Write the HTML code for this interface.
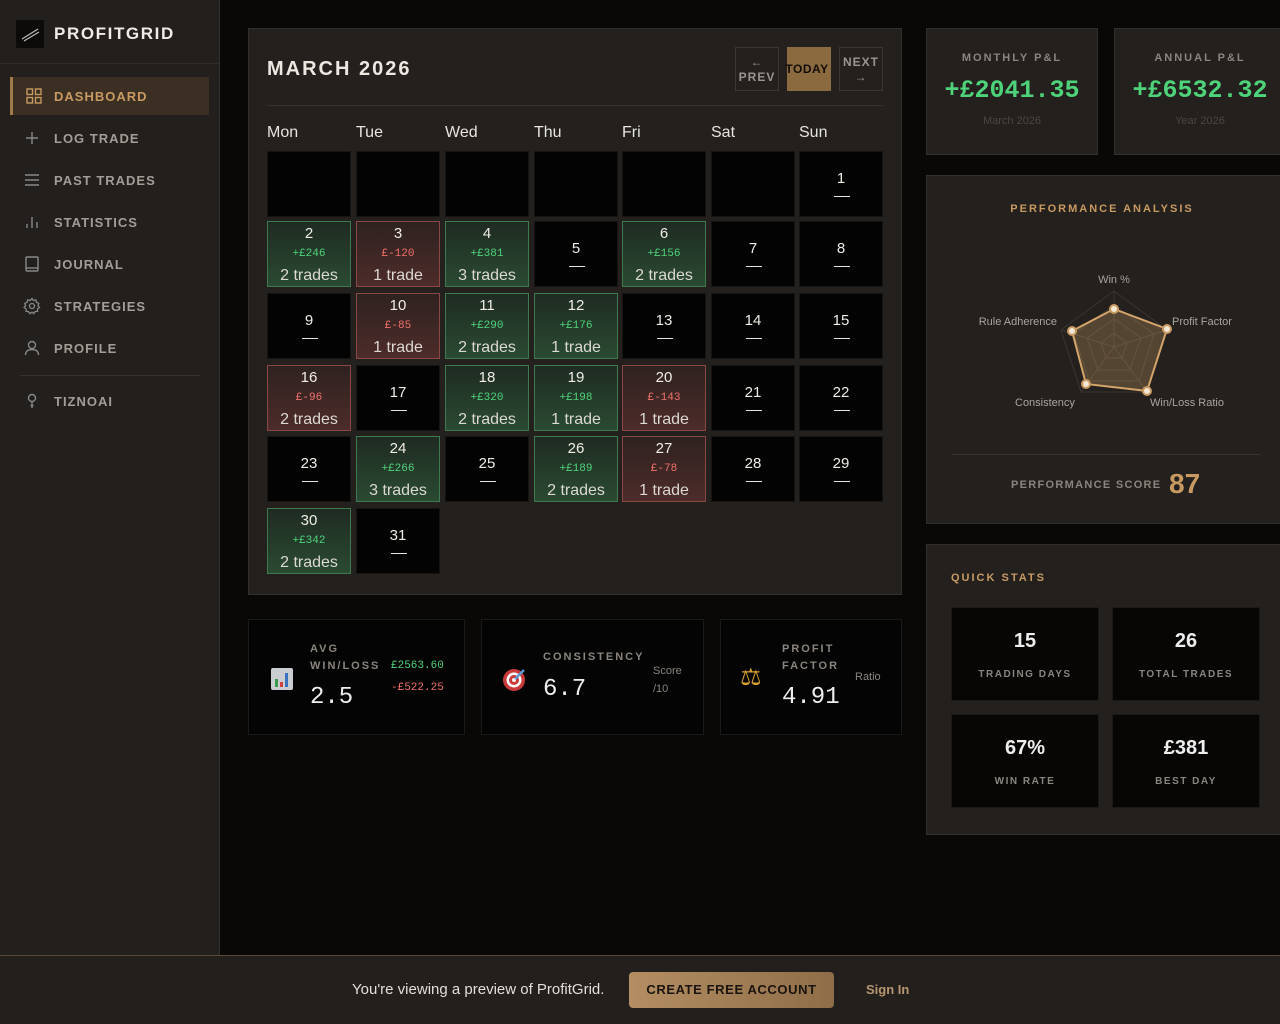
<!DOCTYPE html>
<html><head><meta charset="utf-8"><style>
*{box-sizing:border-box;margin:0;padding:0}
body{width:1280px;height:1024px;background:#0a0807;font-family:"Liberation Sans","DejaVu Sans",sans-serif;position:relative;overflow:hidden;color:#e8e4de}
.a{position:absolute}
.side{left:0;top:0;width:220px;height:955px;background:#221f1c;border-right:1px solid #34302b}
.nav{position:absolute;left:10px;width:199px;height:38px;display:flex;align-items:center;font-size:13px;font-weight:bold;letter-spacing:1px;color:#a29d96}
.nav svg{position:absolute;left:14px}
.nav span{position:absolute;left:44px}
.card{position:absolute;background:#23201d;border:1px solid #33302b}
.cell{position:absolute;width:84px;height:66px;background:#030303;border:1px solid #161412;text-align:center;color:#f0ece6}
.cell .d{position:absolute;left:0;right:0;font-size:15px}
.e .d{top:18px}
.e .dash{position:absolute;left:34px;top:44px;width:16px;height:1px;background:#e8e4de}
.t .d{top:3px}
.t .p{position:absolute;left:0;right:0;top:26px;font-family:"Liberation Mono",monospace;font-size:11px}
.t .n{position:absolute;left:0;right:0;top:45px;font-size:16px;color:#dcd8d2}
.g{background:linear-gradient(#1f2b22,#2a4a32);border-color:#3e7a4f}
.g .p{color:#4ed37a}
.r{background:linear-gradient(#2e2220,#4d2c2a);border-color:#8a4744}
.r .p{color:#f0706a}
.dh{position:absolute;top:124px;font-size:16px;color:#e8e4de}
.lbl{font-size:11px;font-weight:bold;letter-spacing:2px;color:#8a857e}
.qs{position:absolute;width:148px;height:94px;background:#070605;border:1px solid #1c1a17;text-align:center}
.qs b{display:block;margin-top:22px;font-size:20px;color:#eee}
.qs i{display:block;font-style:normal;margin-top:16px;font-size:10px;letter-spacing:1.5px;color:#8a857e;font-weight:bold}
.bc{position:absolute;top:619px;height:116px;background:#050404;border:1px solid #1c1a17}
</style></head><body>
<div class="a side">
 <div class="a" style="left:16px;top:20px;width:28px;height:28px;background:#0c0b0a"><svg width="28" height="28"><path d="M6 19 L22 9 M8 21 L23 12" stroke="#bbb" stroke-width="1.2"/></svg></div>
 <div class="a" style="left:54px;top:24px;font-size:17px;font-weight:bold;letter-spacing:1.6px;color:#efebe5">PROFITGRID</div>
 <div class="a" style="left:0;top:63px;width:219px;height:1px;background:#302c28"></div>
 <div class="nav" style="top:77px;background:#3a2f22;border-left:3px solid #a07a48;color:#c89a62"><svg style="left:13px" width="16" height="16" fill="none" stroke="#c89a62" stroke-width="1.4"><rect x="1" y="1" width="5.5" height="5.5"/><rect x="9.5" y="1" width="5.5" height="5.5"/><rect x="1" y="9.5" width="5.5" height="5.5"/><rect x="9.5" y="9.5" width="5.5" height="5.5"/></svg><span style="left:41px">DASHBOARD</span></div>
 <div class="nav" style="top:119px"><svg width="16" height="16" stroke="#888" stroke-width="1.4"><path d="M8 2v12M2 8h12"/></svg><span>LOG TRADE</span></div>
 <div class="nav" style="top:161px"><svg width="16" height="16" stroke="#888" stroke-width="1.4"><path d="M1 3h14M1 8h14M1 13h14"/></svg><span>PAST TRADES</span></div>
 <div class="nav" style="top:203px"><svg width="16" height="16" stroke="#888" stroke-width="1.4"><path d="M3 14v-4M8 14V3M13 14V8"/></svg><span>STATISTICS</span></div>
 <div class="nav" style="top:245px"><svg width="16" height="16" fill="none" stroke="#888" stroke-width="1.4"><rect x="2" y="1" width="12" height="14" rx="1"/><path d="M2 12h12"/></svg><span>JOURNAL</span></div>
 <div class="nav" style="top:287px"><svg width="18" height="18" fill="none" stroke="#888" stroke-width="1.3" style="left:13px"><circle cx="9" cy="9" r="2.5"/><path d="M9 1.5l1.5 2 2.4-.6.6 2.4 2.3 1-.8 2.3 1.5 1.9-2 1.4.1 2.5-2.5.1-1.3 2.1L9 15.2 6.8 16.6 5.4 14.5 3 14.4l.1-2.5-2-1.4 1.5-1.9L1.8 6.3l2.3-1 .6-2.4 2.4.6z"/></svg><span>STRATEGIES</span></div>
 <div class="nav" style="top:329px"><svg width="16" height="16" fill="none" stroke="#888" stroke-width="1.4"><circle cx="8" cy="5" r="3.5"/><path d="M1.5 15c0-4 3-5.5 6.5-5.5s6.5 1.5 6.5 5.5"/></svg><span>PROFILE</span></div>
 <div class="a" style="left:20px;top:375px;width:180px;height:1px;background:#35312c"></div>
 <div class="nav" style="top:382px"><svg width="16" height="16" fill="none" stroke="#888" stroke-width="1.4"><circle cx="8" cy="5" r="3.5"/><path d="M8 9v6M6.5 12.5h3"/></svg><span>TIZNOAI</span></div>
</div>

<div class="card" style="left:248px;top:28px;width:654px;height:567px"></div>
<div class="a" style="left:267px;top:58px;font-size:20px;font-weight:bold;letter-spacing:2px;color:#ebe7e1">MARCH 2026</div>
<div class="a" style="left:735px;top:47px;width:44px;height:44px;border:1px solid #3a3631;text-align:center;font-size:12px;font-weight:bold;letter-spacing:1px;color:#9a958e;line-height:15px;padding-top:7px">←<br>PREV</div>
<div class="a" style="left:787px;top:47px;width:44px;height:44px;background:#8c6a3f;text-align:center;font-size:12px;font-weight:bold;color:#120d08;line-height:44px;letter-spacing:.5px;white-space:nowrap;overflow:visible"><span style="margin-left:-4px">TODAY</span></div>
<div class="a" style="left:839px;top:47px;width:44px;height:44px;border:1px solid #3a3631;text-align:center;font-size:12px;font-weight:bold;letter-spacing:1px;color:#9a958e;line-height:15px;padding-top:7px">NEXT<br>→</div>
<div class="a" style="left:267px;top:105px;width:616px;height:1px;background:#35312c"></div>
<div class="dh" style="left:267px">Mon</div><div class="dh" style="left:356px">Tue</div><div class="dh" style="left:445px">Wed</div><div class="dh" style="left:534px">Thu</div><div class="dh" style="left:622px">Fri</div><div class="dh" style="left:711px">Sat</div><div class="dh" style="left:799px">Sun</div>

<div class="cell" style="left:267px;top:151px"></div><div class="cell" style="left:356px;top:151px"></div><div class="cell" style="left:445px;top:151px"></div><div class="cell" style="left:534px;top:151px"></div><div class="cell" style="left:622px;top:151px"></div><div class="cell" style="left:711px;top:151px"></div>
<div class="cell e" style="left:799px;top:151px"><div class="d">1</div><div class="dash"></div></div>
<div class="cell t g" style="left:267px;top:221px"><div class="d">2</div><div class="p">+£246</div><div class="n">2 trades</div></div>
<div class="cell t r" style="left:356px;top:221px"><div class="d">3</div><div class="p">£-120</div><div class="n">1 trade</div></div>
<div class="cell t g" style="left:445px;top:221px"><div class="d">4</div><div class="p">+£381</div><div class="n">3 trades</div></div>
<div class="cell e" style="left:534px;top:221px"><div class="d">5</div><div class="dash"></div></div>
<div class="cell t g" style="left:622px;top:221px"><div class="d">6</div><div class="p">+£156</div><div class="n">2 trades</div></div>
<div class="cell e" style="left:711px;top:221px"><div class="d">7</div><div class="dash"></div></div>
<div class="cell e" style="left:799px;top:221px"><div class="d">8</div><div class="dash"></div></div>
<div class="cell e" style="left:267px;top:293px"><div class="d">9</div><div class="dash"></div></div>
<div class="cell t r" style="left:356px;top:293px"><div class="d">10</div><div class="p">£-85</div><div class="n">1 trade</div></div>
<div class="cell t g" style="left:445px;top:293px"><div class="d">11</div><div class="p">+£290</div><div class="n">2 trades</div></div>
<div class="cell t g" style="left:534px;top:293px"><div class="d">12</div><div class="p">+£176</div><div class="n">1 trade</div></div>
<div class="cell e" style="left:622px;top:293px"><div class="d">13</div><div class="dash"></div></div>
<div class="cell e" style="left:711px;top:293px"><div class="d">14</div><div class="dash"></div></div>
<div class="cell e" style="left:799px;top:293px"><div class="d">15</div><div class="dash"></div></div>
<div class="cell t r" style="left:267px;top:365px"><div class="d">16</div><div class="p">£-96</div><div class="n">2 trades</div></div>
<div class="cell e" style="left:356px;top:365px"><div class="d">17</div><div class="dash"></div></div>
<div class="cell t g" style="left:445px;top:365px"><div class="d">18</div><div class="p">+£320</div><div class="n">2 trades</div></div>
<div class="cell t g" style="left:534px;top:365px"><div class="d">19</div><div class="p">+£198</div><div class="n">1 trade</div></div>
<div class="cell t r" style="left:622px;top:365px"><div class="d">20</div><div class="p">£-143</div><div class="n">1 trade</div></div>
<div class="cell e" style="left:711px;top:365px"><div class="d">21</div><div class="dash"></div></div>
<div class="cell e" style="left:799px;top:365px"><div class="d">22</div><div class="dash"></div></div>
<div class="cell e" style="left:267px;top:436px"><div class="d">23</div><div class="dash"></div></div>
<div class="cell t g" style="left:356px;top:436px"><div class="d">24</div><div class="p">+£266</div><div class="n">3 trades</div></div>
<div class="cell e" style="left:445px;top:436px"><div class="d">25</div><div class="dash"></div></div>
<div class="cell t g" style="left:534px;top:436px"><div class="d">26</div><div class="p">+£189</div><div class="n">2 trades</div></div>
<div class="cell t r" style="left:622px;top:436px"><div class="d">27</div><div class="p">£-78</div><div class="n">1 trade</div></div>
<div class="cell e" style="left:711px;top:436px"><div class="d">28</div><div class="dash"></div></div>
<div class="cell e" style="left:799px;top:436px"><div class="d">29</div><div class="dash"></div></div>
<div class="cell t g" style="left:267px;top:508px"><div class="d">30</div><div class="p">+£342</div><div class="n">2 trades</div></div>
<div class="cell e" style="left:356px;top:508px"><div class="d">31</div><div class="dash"></div></div>

<div class="bc" style="left:248px;width:217px">
 <svg class="a" style="left:21px;top:47px" width="24" height="24"><rect x="1" y="1" width="22" height="22" rx="2" fill="#c9ccd0"/><rect x="5" y="12" width="3" height="8" fill="#3a9a4a"/><rect x="10" y="15" width="3" height="5" fill="#d04040"/><rect x="15" y="6" width="3" height="14" fill="#3a70c0"/></svg>
 <div class="a lbl" style="left:61px;top:21px;line-height:17px">AVG<br>WIN/LOSS</div>
 <div class="a" style="left:61px;top:64px;font-family:'Liberation Mono',monospace;font-size:24px;color:#eee">2.5</div>
 <div class="a" style="left:142px;top:40px;font-family:'Liberation Mono',monospace;font-size:11px;color:#4ed37a">£2563.60</div>
 <div class="a" style="left:142px;top:62px;font-family:'Liberation Mono',monospace;font-size:11px;color:#f0706a">-£522.25</div>
</div>
<div class="bc" style="left:481px;width:223px">
 <svg class="a" style="left:20px;top:46px" width="26" height="26"><circle cx="12" cy="14" r="11" fill="#c93a3a"/><circle cx="12" cy="14" r="7.5" fill="#fff"/><circle cx="12" cy="14" r="5" fill="#c93a3a"/><circle cx="12" cy="14" r="2" fill="#fff"/><path d="M13 13 L22 4" stroke="#5a9ad0" stroke-width="2.5"/></svg>
 <div class="a lbl" style="left:61px;top:31px">CONSISTENCY</div>
 <div class="a" style="left:61px;top:56px;font-family:'Liberation Mono',monospace;font-size:24px;color:#eee">6.7</div>
 <div class="a" style="left:171px;top:42px;font-size:11px;color:#8a857e;line-height:18px">Score<br>/10</div>
</div>
<div class="bc" style="left:720px;width:182px">
 <div class="a" style="left:19px;top:43px;font-size:24px;color:#d9a030">⚖</div>
 <div class="a lbl" style="left:61px;top:21px;line-height:17px">PROFIT<br>FACTOR</div>
 <div class="a" style="left:61px;top:64px;font-family:'Liberation Mono',monospace;font-size:24px;color:#eee">4.91</div>
 <div class="a" style="left:134px;top:51px;font-size:11px;color:#8a857e">Ratio</div>
</div>

<div class="card" style="left:926px;top:28px;width:172px;height:127px;text-align:center">
 <div class="lbl" style="margin-top:23px">MONTHLY P&amp;L</div>
 <div style="margin-top:12px;font-family:'Liberation Mono',monospace;font-size:25px;font-weight:bold;color:#4ed37a">+£2041.35</div>
 <div style="margin-top:10px;font-size:11px;color:#4a4641">March 2026</div>
</div>
<div class="card" style="left:1114px;top:28px;width:172px;height:127px;text-align:center">
 <div class="lbl" style="margin-top:23px">ANNUAL P&amp;L</div>
 <div style="margin-top:12px;font-family:'Liberation Mono',monospace;font-size:25px;font-weight:bold;color:#4ed37a">+£6532.32</div>
 <div style="margin-top:10px;font-size:11px;color:#4a4641">Year 2026</div>
</div>
<div class="card" style="left:926px;top:175px;width:360px;height:349px"></div>
<div class="a" style="left:926px;top:203px;width:360px;text-align:center;font-size:11px;font-weight:bold;letter-spacing:2px;color:#c89a62;padding-right:8px">PERFORMANCE ANALYSIS</div>
<svg class="a" style="left:926px;top:175px" width="354" height="349" font-family="Liberation Sans, sans-serif" font-size="11" fill="#a9a49d">
 <g transform="translate(188,172)" fill="none" stroke="#3a352f" stroke-width="1">
  <polygon points="0,-56 53,-17 33,45 -33,45 -53,-17"/>
  <polygon points="0,-42 40,-13 25,34 -25,34 -40,-13"/>
  <polygon points="0,-28 27,-9 16,23 -16,23 -27,-9"/>
  <polygon points="0,-14 13,-4 8,11 -8,11 -13,-4"/>
  <path d="M0 0L0 -56M0 0L53 -17M0 0L33 45M0 0L-33 45M0 0L-53 -17"/>
  <polygon points="0,-38 53,-18 33,44 -28,37 -42,-16" fill="rgba(200,154,98,0.3)" stroke="#d4a46a" stroke-width="2"/>
  <g fill="#f2e6d4" stroke="#c89a62" stroke-width="2"><circle cx="0" cy="-38" r="4"/><circle cx="53" cy="-18" r="4"/><circle cx="33" cy="44" r="4"/><circle cx="-28" cy="37" r="4"/><circle cx="-42" cy="-16" r="4"/></g>
 </g>
 <text x="188" y="108" text-anchor="middle" stroke="none">Win %</text>
 <text x="246" y="150" stroke="none">Profit Factor</text>
 <text x="131" y="150" text-anchor="end" stroke="none">Rule Adherence</text>
 <text x="89" y="231" stroke="none">Consistency</text>
 <text x="224" y="231" stroke="none">Win/Loss Ratio</text>
</svg>
<div class="a" style="left:952px;top:454px;width:308px;height:1px;background:#36322d"></div>
<div class="a" style="left:1011px;top:479px;font-size:11px;font-weight:bold;letter-spacing:1.3px;color:#8a857e">PERFORMANCE SCORE</div>
<div class="a" style="left:1169px;top:468px;font-size:28px;font-weight:bold;color:#c89a62">87</div>

<div class="card" style="left:926px;top:544px;width:360px;height:291px"></div>
<div class="a" style="left:951px;top:572px;font-size:11px;font-weight:bold;letter-spacing:2px;color:#c89a62">QUICK STATS</div>
<div class="qs" style="left:951px;top:607px"><b>15</b><i>TRADING DAYS</i></div>
<div class="qs" style="left:1112px;top:607px"><b>26</b><i>TOTAL TRADES</i></div>
<div class="qs" style="left:951px;top:714px"><b>67%</b><i>WIN RATE</i></div>
<div class="qs" style="left:1112px;top:714px"><b>£381</b><i>BEST DAY</i></div>

<div class="a" style="left:0;top:955px;width:1280px;height:69px;background:#221f1c;border-top:1px solid #5a4a36"></div>
<div class="a" style="left:352px;top:981px;font-size:15px;color:#e2ded8">You're viewing a preview of ProfitGrid.</div>
<div class="a" style="left:629px;top:972px;width:205px;height:36px;border-radius:4px;background:linear-gradient(90deg,#b48e62,#8e6d48);text-align:center;line-height:36px;font-size:13px;font-weight:bold;letter-spacing:.6px;color:#1a140e">CREATE FREE ACCOUNT</div>
<div class="a" style="left:866px;top:982px;font-size:13px;font-weight:bold;color:#b89670">Sign In</div>
</body></html>
